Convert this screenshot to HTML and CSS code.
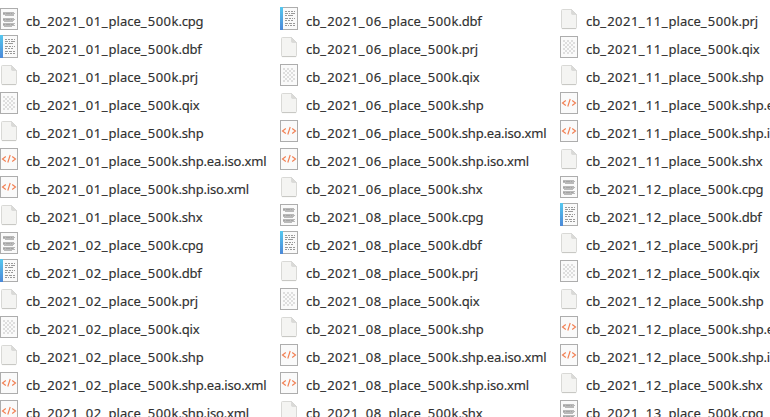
FILE: index.html
```
<!DOCTYPE html>
<html lang="en">
<head>
<meta charset="utf-8">
<title>Files</title>
<link rel="stylesheet" href="styles.css">
</head>
<body>
<svg class="defs" width="0" height="0" aria-hidden="true">
  <defs>
    <linearGradient id="spine" x1="0" y1="0" x2="0" y2="1"><stop offset="0" stop-color="#55c8ef"/><stop offset="1" stop-color="#4b88d8"/></linearGradient>
    <symbol id="cpg" viewBox="0 0 18 24">
      <rect x=".5" y="1.5" width="17" height="21" fill="#fafafa" stroke="#adadad"/>
      <path d="M3 5.5h11M3 6.5h12M3 7.5h11M5 8.5h9M3 11.5h11M3 12.5h12M3 13.5h11M4 14.5h9M3 16.5h12M3 17.5h11M3 18.5h12M4 19.5h8" stroke="#b9b9b9"/>
      <path d="M3 6.5h9M3 12.5h9M3 17.5h10" stroke="#a4a4a4" stroke-dasharray="2 1 4 1"/>
    </symbol>
    <symbol id="dbf" viewBox="0 0 18 24">
      <rect x=".5" y=".5" width="17" height="22" fill="#fafafa" stroke="#adadad"/>
      <path d="M0 0h3v23H0z" fill="url(#spine)"/>
      <path d="M5 4.5h2M8 4.5h2M11 4.5h2M14 4.5h1M5 6.5h3M9 6.5h1M11 6.5h4M5 8.5h2M8 8.5h5M5 11.5h3M9 11.5h2M12 11.5h1M14 11.5h1M5 13.5h2M8 13.5h2M11 13.5h2M5 16.5h3M9 16.5h3M13 16.5h2M5 18.5h2M8 18.5h1M10 18.5h2M13 18.5h2" stroke="#999"/>
    </symbol>
    <symbol id="doc" viewBox="0 0 18 24">
      <path d="M2.5 2.5h9l5 5v13q0 1-1 1h-13q-1 0-1-1v-17q0-1 1-1z" fill="#f4f4f2" stroke="#d9d9d6"/>
      <path d="M11.5 2.5v4q0 1 1 1h4z" fill="#dadad7" stroke="#d4d4d1" stroke-width=".6"/>
      <path d="M2 21.6h14" stroke="#c4c4c1" stroke-width=".9"/>
    </symbol>
    <pattern id="check" x="3" y="5" width="4" height="4" patternUnits="userSpaceOnUse"><path d="M0 0h2v2H0zM2 2h2v2H2z" fill="#dedede"/></pattern>
    <symbol id="qix" viewBox="0 0 18 24">
      <rect x=".5" y="1.5" width="17" height="21" fill="#fafafa" stroke="#adadad"/>
      <rect x="3" y="5" width="12" height="14" fill="url(#check)"/>
    </symbol>
    <symbol id="xml" viewBox="0 0 18 24">
      <rect x=".5" y="1.5" width="17" height="21" fill="#fafafa" stroke="#adadad"/>
      <path d="M5.8 9.5L2.5 12l3.3 2.5M12.2 9.5l3.3 2.5-3.3 2.5M10.2 8l-2.4 7.5" fill="none" stroke="#f27f52" stroke-width="1.15"/>
    </symbol>
  </defs>
</svg>
<main class="files" id="files"></main>
<script src="files.js"></script>
</body>
</html>
```
FILE: styles.css
```
body {
  margin: 0;
  background: #fff;
  color: #303030;
  font: 13px/28px "Noto Sans", sans-serif;
  -webkit-text-stroke: 0.15px #303030;
  overflow: hidden;
}
.defs { display: block; }
.files {
  display: grid;
  grid-template-columns: repeat(3, 280px);
  height: 417px;
  padding-top: 7px;
  box-sizing: border-box;
  overflow: hidden;
}
.file {
  display: flex;
  height: 28px;
  white-space: nowrap;
}
.icon {
  flex: none;
  width: 18px;
  height: 24px;
  margin-right: 8px;
}
.num { letter-spacing: 0.48px; }
.sep { letter-spacing: 1.15px; }
.ext { letter-spacing: -0.18px; }
```
FILE: files.js
```
const types = ["cpg", "dbf", "prj", "qix", "shp", "shp.ea.iso.xml", "shp.iso.xml", "shx"];
const icons = ["cpg", "dbf", "doc", "qix", "doc", "xml", "xml", "doc"];
const columns = [
  { states: ["01", "02"], start: 0 },
  { states: ["06", "08"], start: 1 },
  { states: ["11", "12", "13"], start: 2 }
];
const spaced = text => text
  .replace(/\d+|_/g, m => `<span class="${m === "_" ? "sep" : "num"}">${m}</span>`);
document.getElementById("files").innerHTML = columns.map(({ states, start }) => {
  const rows = Array.from({ length: 15 }, (_, i) => {
    const n = i + start;
    const t = n % 8;
    const stem = `cb_2021_${states[Math.floor(n / 8)]}_place_500k`;
    return `<div class="file"><svg class="icon"><use href="#${icons[t]}"/></svg>` +
      `<span class="name">${spaced(stem)}<span class="ext">.${types[t]}</span></span></div>`;
  });
  return `<div class="column">${rows.join("")}</div>`;
}).join("");
```
